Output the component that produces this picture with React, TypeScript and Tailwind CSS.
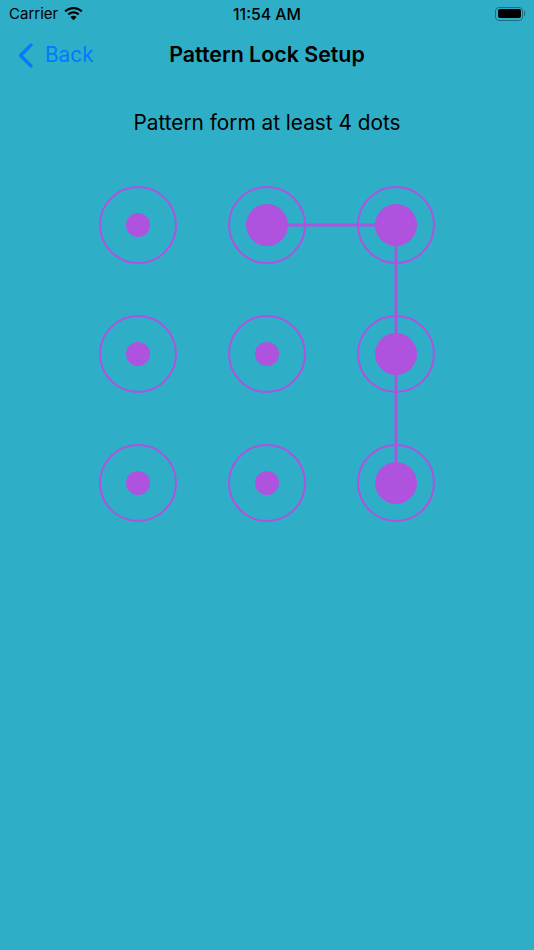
import React from 'react';

const selected = [1, 2, 5, 8];

function WifiIcon() {
  return (
    <svg width="21" height="15" viewBox="0 0 21 15" fill="#000">
      <path d="M10.5 3.2c2.9 0 5.6 1.1 7.6 3l1.5-1.6C17.2 2.3 14 .9 10.5.9S3.8 2.3 1.4 4.6L2.9 6.2c2-1.9 4.7-3 7.6-3z" />
      <path d="M10.5 7.6c1.7 0 3.2.6 4.4 1.7l1.6-1.6c-1.6-1.5-3.7-2.4-6-2.4s-4.4.9-6 2.4l1.6 1.6c1.2-1.1 2.7-1.7 4.4-1.7z" />
      <path d="M10.5 14.2l3.1-3.2c-.8-.8-1.9-1.2-3.1-1.2s-2.3.4-3.1 1.2z" />
    </svg>
  );
}

function Battery() {
  return (
    <div className="flex items-center gap-[1px] -mt-[1px]">
      <div className="w-[28px] h-[14px] rounded-[4px] border border-[#1a6f82] p-[1.5px]">
        <div className="w-full h-full bg-black rounded-[2px]" />
      </div>
      <div className="w-[1px] h-[5px] bg-[#1a6f82]" />
    </div>
  );
}

function Dot({ on }: { on: boolean }) {
  return (
    <div className="w-[78px] h-[78px] rounded-full border-2 border-[#af52de] flex items-center justify-center">
      <div className={on ? 'w-[42px] h-[42px] rounded-full bg-[#af52de]' : 'w-[24px] h-[24px] rounded-full bg-[#af52de]'} />
    </div>
  );
}

export default function App() {
  return (
    <div className="h-[950px] bg-[#2fafc7] text-black overflow-hidden font-['Inter',sans-serif]">
      {/* Status bar */}
      <div className="h-[28px] grid grid-cols-3 items-center pl-[9px] pr-[9px]">
        <div className="flex items-center gap-[5px] -mt-[1px]">
          <span className="text-[15px] leading-none">Carrier</span>
          <WifiIcon />
        </div>
        <div className="text-center text-[15.8px] font-medium leading-none mt-[1px]">11:54 AM</div>
        <div className="flex justify-end">
          <Battery />
        </div>
      </div>

      {/* Nav bar */}
      <div className="relative h-[54px] flex items-center justify-center">
        <div className="absolute left-[18px] top-0 h-full flex items-center gap-[12px] text-[#007aff]">
          <svg width="15" height="25" viewBox="0 0 15 25" fill="none" stroke="#007aff" strokeWidth="3.2" strokeLinecap="round" strokeLinejoin="round">
            <path d="M13 2L2.5 12.5L13 23" />
          </svg>
          <span className="text-[20.8px] leading-none">Back</span>
        </div>
        <span className="text-[21.4px] font-semibold leading-none">Pattern Lock Setup</span>
      </div>

      <p className="mt-[28px] text-center text-[20.8px] leading-[26px]">Pattern form at least 4 dots</p>

      {/* Pattern grid */}
      <div className="relative mt-[50px] ml-[99px] w-fit grid grid-cols-3 gap-[51px]">
        {Array.from({ length: 9 }).map((_, i) => (
          <Dot key={i} on={selected.includes(i)} />
        ))}
        {/* Drawn path */}
        <svg className="absolute left-0 top-0" width="336" height="336" fill="none" stroke="#af52de" strokeWidth="2.8">
          <path d="M168 39H297V297" />
        </svg>
      </div>
    </div>
  );
}
